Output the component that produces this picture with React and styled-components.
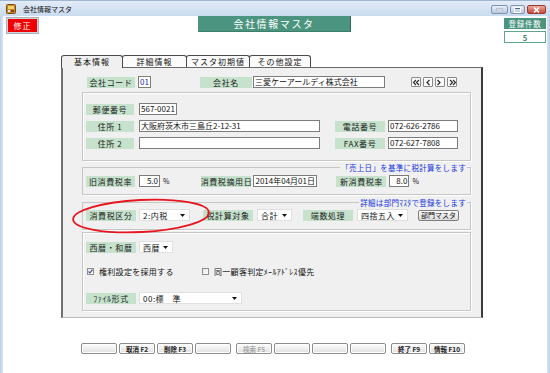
import React from 'react';
import styled, { createGlobalStyle } from 'styled-components';

const GlobalStyle = createGlobalStyle`
  html, body {
    margin: 0;
    padding: 0;
    background: #fff;
  }
  body {
    font-family: "Noto Sans CJK JP", "DejaVu Sans", sans-serif;
    color: #111;
  }
`;

const Window = styled.div`
  width: 550px;
  height: 373px;
  box-sizing: border-box;
  padding: 0 3px;
  background: linear-gradient(90deg, #b9cde6, #d3e1f2 2px, #d3e1f2 calc(100% - 2px), #b9cde6);
  display: flex;
  flex-direction: column;
  overflow: hidden;
`;

const TitleBar = styled.div`
  flex: none;
  height: 16px;
  margin: 0 -3px;
  padding: 0 4px 0 6px;
  display: flex;
  align-items: center;
  background: linear-gradient(#e3ecf7, #c9dbef);
  border-top: 1px solid #9fb6d3;
  box-sizing: border-box;
`;

const TitleText = styled.span`
  margin-left: 7px;
  font-size: 7px;
  color: #111;
`;

const WinControls = styled.div`
  margin-left: auto;
  margin-top: 2px;
  display: flex;
  gap: 2px;
`;

const WinButton = styled.span`
  width: ${p => p.$w}px;
  height: 9px;
  box-sizing: border-box;
  border: 1px solid ${p => (p.$close ? '#9c3a30' : '#7f93b3')};
  border-radius: 2px;
  background: ${p =>
    p.$close ? 'linear-gradient(#e9a99c, #c7463a)' : 'linear-gradient(#e7eef8, #b9c9df)'};
  display: flex;
  align-items: center;
  justify-content: center;
`;

const Body = styled.div`
  flex: 1;
  position: relative;
  background: #fff;
  display: flex;
  flex-direction: column;
`;

const Header = styled.div`
  height: 26px;
  display: flex;
  align-items: flex-start;
`;

const ModButton = styled.div`
  margin: 1px 0 0 3px;
  width: 33px;
  height: 17px;
  box-sizing: border-box;
  border: 2px solid #cdd3d9;
  outline: 1px solid #aab3bb;
  outline-offset: -1px;
  background: #f00000;
  color: #fff;
  font-size: 8px;
  letter-spacing: 1px;
  display: flex;
  align-items: center;
  justify-content: center;
`;

const Banner = styled.div`
  margin-left: 159px;
  width: 153px;
  height: 16px;
  box-sizing: border-box;
  background: #4b9580;
  border-right: 1px solid #2f6b58;
  border-bottom: 1px solid #3d7f6b;
  color: #fff;
  font-size: 10px;
  letter-spacing: 1.6px;
  display: flex;
  align-items: center;
  justify-content: center;
`;

const CountBox = styled.div`
  margin: 2px 1px 0 auto;
  width: 42px;
  display: flex;
  flex-direction: column;
  gap: 2px;
`;

const CountHead = styled.div`
  height: 11px;
  background: #4b9580;
  color: #fff;
  font-size: 7.5px;
  letter-spacing: 0.8px;
  display: flex;
  align-items: center;
  justify-content: center;
`;

const CountValue = styled.div`
  height: 12px;
  box-sizing: border-box;
  border: 1px solid #5fa58d;
  background: #fff;
  color: #2f8a68;
  font-size: 7.5px;
  font-weight: bold;
  display: flex;
  align-items: center;
  justify-content: center;
`;

const TabStrip = styled.div`
  margin: 13px 0 0 58px;
  display: flex;
  height: 12px;
`;

const Tab = styled.div`
  width: ${p => p.$w}px;
  box-sizing: border-box;
  border: 1px solid #4a4a4a;
  border-bottom: none;
  border-radius: 3px 3px 0 0;
  margin-right: -1px;
  background: ${p => (p.$active ? '#f0f0f0' : '#fbfbfb')};
  font-size: 8px;
  letter-spacing: 1px;
  display: flex;
  align-items: center;
  justify-content: center;
  position: relative;
  z-index: ${p => (p.$active ? 2 : 1)};
  padding-bottom: ${p => (p.$active ? 1 : 0)}px;
  margin-bottom: ${p => (p.$active ? -1 : 0)}px;
  height: ${p => (p.$active ? 13 : 12)}px;
`;

const Panel = styled.div`
  margin-left: 58px;
  width: 422px;
  height: 251px;
  box-sizing: border-box;
  background: #f0f0f0;
  border-top: 1px solid #6a6a6a;
  border-left: 2px solid #707070;
  border-right: 2px solid #3c3c3c;
  border-bottom: 1px solid #b8b8b8;
  padding: 8px 0 0 19px;
  display: flex;
  flex-direction: column;
`;

const Row = styled.div`
  display: flex;
  align-items: center;
  height: 12px;
  padding-left: ${p => p.$pl || 0}px;
  margin-top: ${p => p.$mt || 0}px;
`;

const Label = styled.span`
  flex: none;
  width: ${p => p.$w || 48}px;
  height: 11px;
  margin-left: ${p => p.$ml || 0}px;
  background: #c6e2cd;
  color: #1a1a1a;
  font-size: 8px;
  letter-spacing: 0.6px;
  display: flex;
  align-items: center;
  justify-content: center;
  white-space: nowrap;
`;

const Field = styled.span`
  flex: none;
  box-sizing: border-box;
  width: ${p => p.$w}px;
  height: 12px;
  margin-left: ${p => p.$ml ?? 4}px;
  background: #fff;
  border: 1px solid #7c7c7c;
  padding: 0 1px;
  font-size: 8px;
  line-height: 10px;
  color: ${p => p.$color || '#111'};
  text-align: ${p => p.$align || 'left'};
  white-space: nowrap;
  overflow: hidden;
`;

const Unit = styled.span`
  margin-left: 3px;
  font-size: 7px;
`;

const Select = styled.span`
  flex: none;
  box-sizing: border-box;
  width: ${p => p.$w}px;
  height: 12px;
  margin-left: ${p => p.$ml ?? 4}px;
  background: #fff;
  border: 1px solid #e0e0e0;
  padding: 0 4px 0 3px;
  font-size: 8px;
  letter-spacing: 0.5px;
  display: flex;
  align-items: center;
  justify-content: space-between;
  white-space: pre;
`;

const NavGroup = styled.div`
  display: flex;
  gap: 2px;
  margin-left: 26px;
`;

const NavButton = styled.span`
  width: 10px;
  height: 10px;
  box-sizing: border-box;
  border: 1px solid #8a8a8a;
  border-radius: 1px;
  background: #fafafa;
  display: flex;
  align-items: center;
  justify-content: center;
`;

const Box = styled.div`
  box-sizing: border-box;
  width: 389px;
  height: ${p => p.$h}px;
  margin-top: ${p => p.$mt}px;
  border: 1px solid #c6c6c6;
  box-shadow: inset 1px 1px 0 #fff, 1px 1px 0 #fff;
  padding: ${p => p.$pt}px 0 0 3px;
  display: flex;
  flex-direction: column;
`;

const Fieldset = styled.fieldset`
  box-sizing: border-box;
  width: 389px;
  min-width: 0;
  margin: ${p => p.$mt}px 0 0;
  padding: ${p => p.$pt}px 3px ${p => p.$pb}px 3px;
  border: 1px solid #c6c6c6;
  box-shadow: 1px 1px 0 #fff;
`;

const Legend = styled.legend`
  margin-left: auto;
  margin-right: 0;
  padding: 0 1px;
  font-size: 7.5px;
  line-height: 9px;
  color: #1434e0;
  letter-spacing: 0.3px;
`;

const SmallButton = styled.span`
  flex: none;
  margin-left: ${p => p.$ml || 0}px;
  width: ${p => p.$w}px;
  height: 11px;
  box-sizing: border-box;
  border: 1px solid #7e7e7e;
  border-radius: 2px;
  background: linear-gradient(#fbfbfb, #dcdcdc);
  font-size: 7px;
  display: flex;
  align-items: center;
  justify-content: center;
`;

const Check = styled.label`
  display: flex;
  align-items: center;
  margin-left: ${p => p.$ml || 0}px;
  font-size: 8px;
  letter-spacing: 0.3px;
  gap: 5px;
  width: ${p => p.$w || 'auto'};
`;

const CheckBox = styled.span`
  width: 7px;
  height: 7px;
  box-sizing: border-box;
  border: 1px solid #8e8f8f;
  background: linear-gradient(135deg, #e4e4e4, #fff);
  display: flex;
  align-items: center;
  justify-content: center;
`;

const ButtonBar = styled.div`
  display: flex;
  gap: 5px;
  margin: 25px 0 0 78px;
`;

const BtnGroup = styled.div`
  display: flex;
  gap: 2px;
`;

const FnButton = styled.span`
  width: 36px;
  height: 11px;
  box-sizing: border-box;
  border: 1px solid #8c8c8c;
  border-radius: 2px;
  background: linear-gradient(#fdfdfd, #e0e0e0);
  box-shadow: inset 0 0 0 1px #fff;
  font-size: 6.5px;
  font-weight: bold;
  color: ${p => (p.$disabled ? '#a8a8a8' : '#222')};
  display: flex;
  align-items: center;
  justify-content: center;
  white-space: pre;
`;

const Mark = styled.svg`
  position: absolute;
  left: 66px;
  top: 181px;
  pointer-events: none;
`;

const Caret = () => (
  <svg width="5" height="3" viewBox="0 0 5 3">
    <path d="M0 0h5L2.5 3z" fill="#111" />
  </svg>
);

const Chevron = ({ dir, double }) => {
  const pts = dir === 'left' ? ['4,1 1.5,3.5 4,6', '7,1 4.5,3.5 7,6'] : ['2,1 4.5,3.5 2,6', '5,1 7.5,3.5 5,6'];
  const shift = double ? 0 : dir === 'left' ? 1.5 : -0.5;
  return (
    <svg width="8" height="7" viewBox="0 0 8 7">
      <g transform={`translate(${shift},0)`} fill="none" stroke="#222" strokeWidth="1.1">
        <polyline points={pts[0]} />
        {double && <polyline points={pts[1]} />}
      </g>
    </svg>
  );
};

const AppIcon = () => (
  <svg width="10" height="10" viewBox="0 0 10 10">
    <rect x="0.5" y="0.5" width="9" height="9" rx="1" fill="#c98a2a" stroke="#7a4a12" />
    <rect x="2" y="2" width="6" height="3" fill="#f4d36a" />
    <rect x="2" y="6" width="2" height="2" fill="#e8f0ff" />
    <rect x="5" y="6" width="3" height="2" fill="#8a3a1a" />
  </svg>
);

const fnButtons = [
  ['', '取消 F2', '削除 F3', ''],
  ['検索 F5', '', '', ''],
  ['終了 F9', '情報 F10'],
];

export default function App() {
  return (
    <>
      <GlobalStyle />
      <Window>
        <TitleBar>
          <AppIcon />
          <TitleText>会社情報マスタ</TitleText>
          <WinControls>
            <WinButton $w={17}>
              <svg width="7" height="3"><rect x="0" y="1" width="7" height="2" fill="#fff" stroke="#56688a" strokeWidth="0.5" /></svg>
            </WinButton>
            <WinButton $w={15}>
              <svg width="7" height="6"><rect x="0.5" y="0.5" width="6" height="5" fill="none" stroke="#fff" /><rect x="1" y="1" width="5" height="1" fill="#56688a" /></svg>
            </WinButton>
            <WinButton $w={19} $close>
              <svg width="7" height="6"><path d="M1 0.5l5 5M6 0.5l-5 5" stroke="#fff" strokeWidth="1.6" /></svg>
            </WinButton>
          </WinControls>
        </TitleBar>
        <Body>
          <Header>
            <ModButton>修正</ModButton>
            <Banner>会社情報マスタ</Banner>
            <CountBox>
              <CountHead>登録件数</CountHead>
              <CountValue>5</CountValue>
            </CountBox>
          </Header>

          <TabStrip>
            <Tab $w={62} $active>基本情報</Tab>
            <Tab $w={65}>詳細情報</Tab>
            <Tab $w={64}>マスタ初期値</Tab>
            <Tab $w={62}>その他設定</Tab>
          </TabStrip>

          <Panel>
            <Row $pl={5}>
              <Label>会社コード</Label>
              <Field $w={13} $ml={3} $color="#1a2fd0">01</Field>
              <Label $w={52} $ml={49}>会社名</Label>
              <Field $w={132} $ml={1}>三愛ケーアールディ株式会社</Field>
              <NavGroup>
                <NavButton><Chevron dir="left" double /></NavButton>
                <NavButton><Chevron dir="left" /></NavButton>
                <NavButton><Chevron dir="right" /></NavButton>
                <NavButton><Chevron dir="right" double /></NavButton>
              </NavGroup>
            </Row>

            <Box $h={69} $mt={4} $pt={10}>
              <Row>
                <Label>郵便番号</Label>
                <Field $w={38} $ml={5}>567-0021</Field>
              </Row>
              <Row $mt={5}>
                <Label>住所 1</Label>
                <Field $w={181} $ml={5}>大阪府茨木市三島丘2-12-31</Field>
                <Label $w={50} $ml={15}>電話番号</Label>
                <Field $w={70} $ml={3}>072-626-2786</Field>
              </Row>
              <Row $mt={5}>
                <Label>住所 2</Label>
                <Field $w={181} $ml={5} />
                <Label $w={50} $ml={15}>FAX番号</Label>
                <Field $w={70} $ml={3}>072-627-7808</Field>
              </Row>
            </Box>

            <Fieldset $mt={2} $pt={3} $pb={7}>
              <Legend>「売上日」を基準に税計算をします</Legend>
              <Row>
                <Label $w={49}>旧消費税率</Label>
                <Field $w={21} $ml={4} $align="right">5.0</Field>
                <Unit>%</Unit>
                <Label $w={50} $ml={32}>消費税摘用日</Label>
                <Field $w={64} $ml={2}>2014年04月01日</Field>
                <Label $w={50} $ml={19}>新消費税率</Label>
                <Field $w={20} $ml={3} $align="right">8.0</Field>
                <Unit>%</Unit>
              </Row>
            </Fieldset>

            <Fieldset $mt={3} $pt={2} $pb={8}>
              <Legend>詳細は部門ﾏｽﾀで登録をします</Legend>
              <Row>
                <Label $w={50}>消費税区分</Label>
                <Select $w={51} $ml={3}>2:内税<Caret /></Select>
                <Label $w={50} $ml={13}>税計算対象</Label>
                <Select $w={35} $ml={4}>合計<Caret /></Select>
                <Label $w={50} $ml={11}>端数処理</Label>
                <Select $w={51} $ml={4}>四捨五入<Caret /></Select>
                <SmallButton $w={41} $ml={10}>部門マスタ</SmallButton>
              </Row>
            </Fieldset>

            <Box $h={79} $mt={2} $pt={8}>
              <Row>
                <Label $w={50}>西暦・和暦</Label>
                <Select $w={34} $ml={3}>西暦<Caret /></Select>
              </Row>
              <Row $mt={12}>
                <Check $ml={1} $w="115px">
                  <CheckBox>
                    <svg width="5" height="5" viewBox="0 0 5 5">
                      <path d="M0.5 2.5l1.3 1.5L4.5 0.6" fill="none" stroke="#2a3f8a" strokeWidth="1.1" />
                    </svg>
                  </CheckBox>
                  権利設定を採用する
                </Check>
                <Check>
                  <CheckBox />
                  同一顧客判定ﾒｰﾙｱﾄﾞﾚｽ優先
                </Check>
              </Row>
              <Row $mt={15}>
                <Label $w={50}>ﾌｧｲﾙ形式</Label>
                <Select $w={103} $ml={3}>{'00:標　準'}<Caret /></Select>
              </Row>
            </Box>
          </Panel>

          <ButtonBar>
            {fnButtons.map((group, gi) => (
              <BtnGroup key={gi}>
                {group.map((txt, i) => (
                  <FnButton key={i} $disabled={txt.startsWith('検索')}>{txt}</FnButton>
                ))}
              </BtnGroup>
            ))}
          </ButtonBar>

          <Mark width="144" height="38" viewBox="0 0 144 38">
            <ellipse cx="72" cy="19" rx="68" ry="16" fill="none" stroke="#e8141e" strokeWidth="1.8" transform="rotate(-3 72 19)" />
          </Mark>
        </Body>
      </Window>
    </>
  );
}
